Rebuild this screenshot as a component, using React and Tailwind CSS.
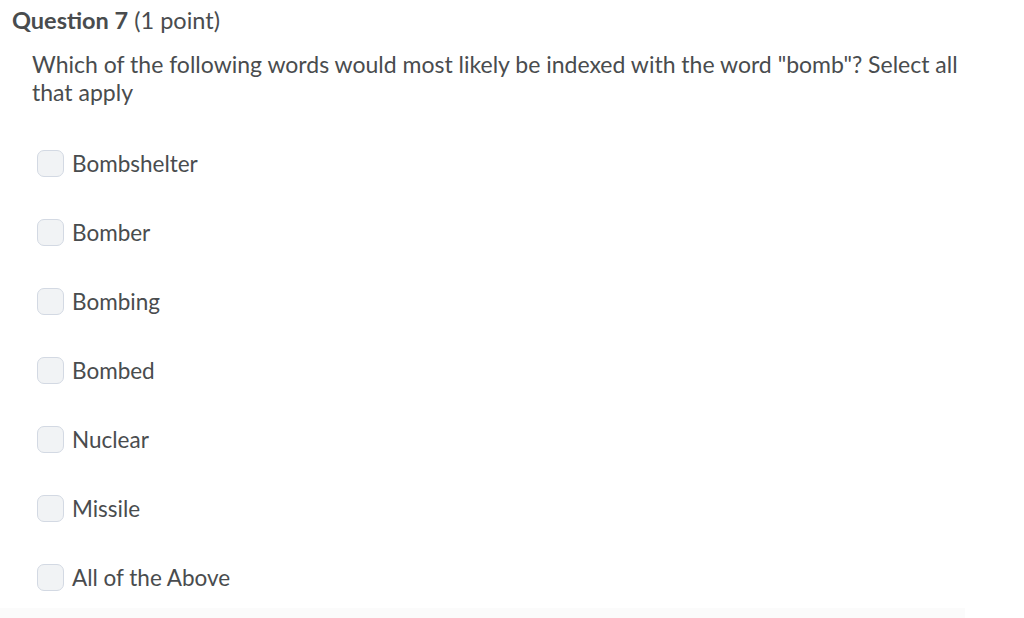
export default function App() {
  const options = ['Bombshelter', 'Bomber', 'Bombing', 'Bombed', 'Nuclear', 'Missile', 'All of the Above'];
  return (
    <div className="w-[1024px] h-[618px] bg-white overflow-hidden text-[#494c4e]" style={{ fontFamily: 'Lato, "Noto Sans", sans-serif' }}>
      <div className="pl-[12px] pt-[7px] text-[23.5px] leading-[26px]">
        <span className="font-bold">Question 7</span> <span>(1 point)</span>
      </div>
      <div className="pl-[32px] pr-[60px] pt-[17px] text-[23px] leading-[28px]">
        Which of the following words would most likely be indexed with the word "bomb"? Select all that apply
      </div>
      <div className="pl-[37px] pt-[44px] flex flex-col gap-[42px]">
        {options.map((o) => (
          <label key={o} className="flex items-center gap-[8px] h-[27px]">
            <span className="w-[27px] h-[27px] rounded-[7px] border border-[#d3d9e3] bg-[#f1f3f5] shrink-0" />
            <span className="text-[22.5px] leading-[27px]">{o}</span>
          </label>
        ))}
      </div>
      <div className="mt-[17px] w-[965px] h-[20px] bg-[#fbfbfb]" />
    </div>
  );
}
